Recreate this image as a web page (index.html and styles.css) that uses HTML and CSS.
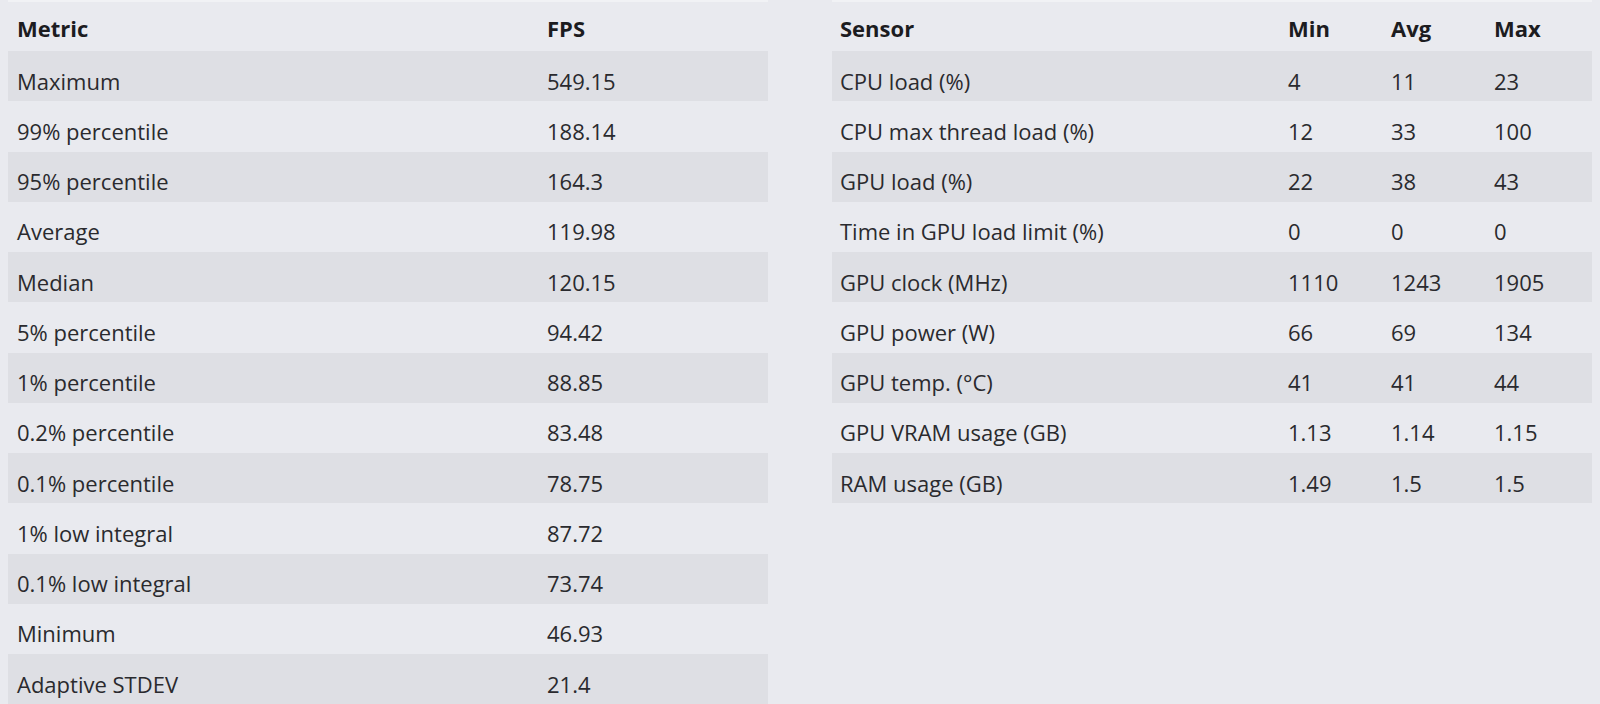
FILE: index.html
```html
<!DOCTYPE html>
<html lang="en">
<head>
<meta charset="utf-8">
<title>Benchmark results</title>
<link rel="stylesheet" href="styles.css">
</head>
<body>
<div class="layout">
  <table class="stats fps">
    <colgroup><col class="c-name"><col></colgroup>
    <thead>
      <tr><th>Metric</th><th>FPS</th></tr>
    </thead>
    <tbody>
      <tr><td>Maximum</td><td>549.15</td></tr>
      <tr><td>99% percentile</td><td>188.14</td></tr>
      <tr><td>95% percentile</td><td>164.3</td></tr>
      <tr><td>Average</td><td>119.98</td></tr>
      <tr><td>Median</td><td>120.15</td></tr>
      <tr><td>5% percentile</td><td>94.42</td></tr>
      <tr><td>1% percentile</td><td>88.85</td></tr>
      <tr><td>0.2% percentile</td><td>83.48</td></tr>
      <tr><td>0.1% percentile</td><td>78.75</td></tr>
      <tr><td>1% low integral</td><td>87.72</td></tr>
      <tr><td>0.1% low integral</td><td>73.74</td></tr>
      <tr><td>Minimum</td><td>46.93</td></tr>
      <tr><td>Adaptive STDEV</td><td>21.4</td></tr>
    </tbody>
  </table>
  <table class="stats sensors">
    <colgroup><col class="c-sensor"><col class="c-num"><col class="c-num"><col></colgroup>
    <thead>
      <tr><th>Sensor</th><th>Min</th><th>Avg</th><th>Max</th></tr>
    </thead>
    <tbody>
      <tr><td>CPU load (%)</td><td>4</td><td>11</td><td>23</td></tr>
      <tr><td>CPU max thread load (%)</td><td>12</td><td>33</td><td>100</td></tr>
      <tr><td>GPU load (%)</td><td>22</td><td>38</td><td>43</td></tr>
      <tr><td>Time in GPU load limit (%)</td><td>0</td><td>0</td><td>0</td></tr>
      <tr><td>GPU clock (MHz)</td><td>1110</td><td>1243</td><td>1905</td></tr>
      <tr><td>GPU power (W)</td><td>66</td><td>69</td><td>134</td></tr>
      <tr><td>GPU temp. (°C)</td><td>41</td><td>41</td><td>44</td></tr>
      <tr><td>GPU VRAM usage (GB)</td><td>1.13</td><td>1.14</td><td>1.15</td></tr>
      <tr><td>RAM usage (GB)</td><td>1.49</td><td>1.5</td><td>1.5</td></tr>
    </tbody>
  </table>
</div>
</body>
</html>
```

FILE: styles.css
```css
html, body {
  margin: 0;
  padding: 0;
  background: #e9eaef;
}

body {
  padding: 0 8px;
  font-family: "Open Sans", "Noto Sans", sans-serif;
  font-size: 22px;
  color: #2a2a2e;
  overflow: hidden;
}

.layout {
  display: flex;
  align-items: flex-start;
  gap: 64px;
}

.stats {
  width: 760px;
  border-collapse: collapse;
  table-layout: fixed;
  border-top: 2px solid #f1f2f5;
}

.stats th,
.stats td {
  padding: 0 8px 0 9px;
  text-align: left;
  white-space: nowrap;
  vertical-align: top;
}

.stats th {
  height: 50px;
  line-height: 30px;
  padding-top: 11px;
  box-sizing: border-box;
  font-weight: 700;
  color: #1c1c1f;
}

.stats td {
  height: 50.25px;
  line-height: 30px;
  padding-top: 14.5px;
  box-sizing: border-box;
}

.stats tbody tr:nth-child(odd) td {
  background: #dedfe4;
}

.fps .c-name { width: 530px; }

.sensors th,
.sensors td { padding-left: 8px; }
.sensors .c-sensor { width: 448px; }
.sensors .c-num { width: 103px; }
```
